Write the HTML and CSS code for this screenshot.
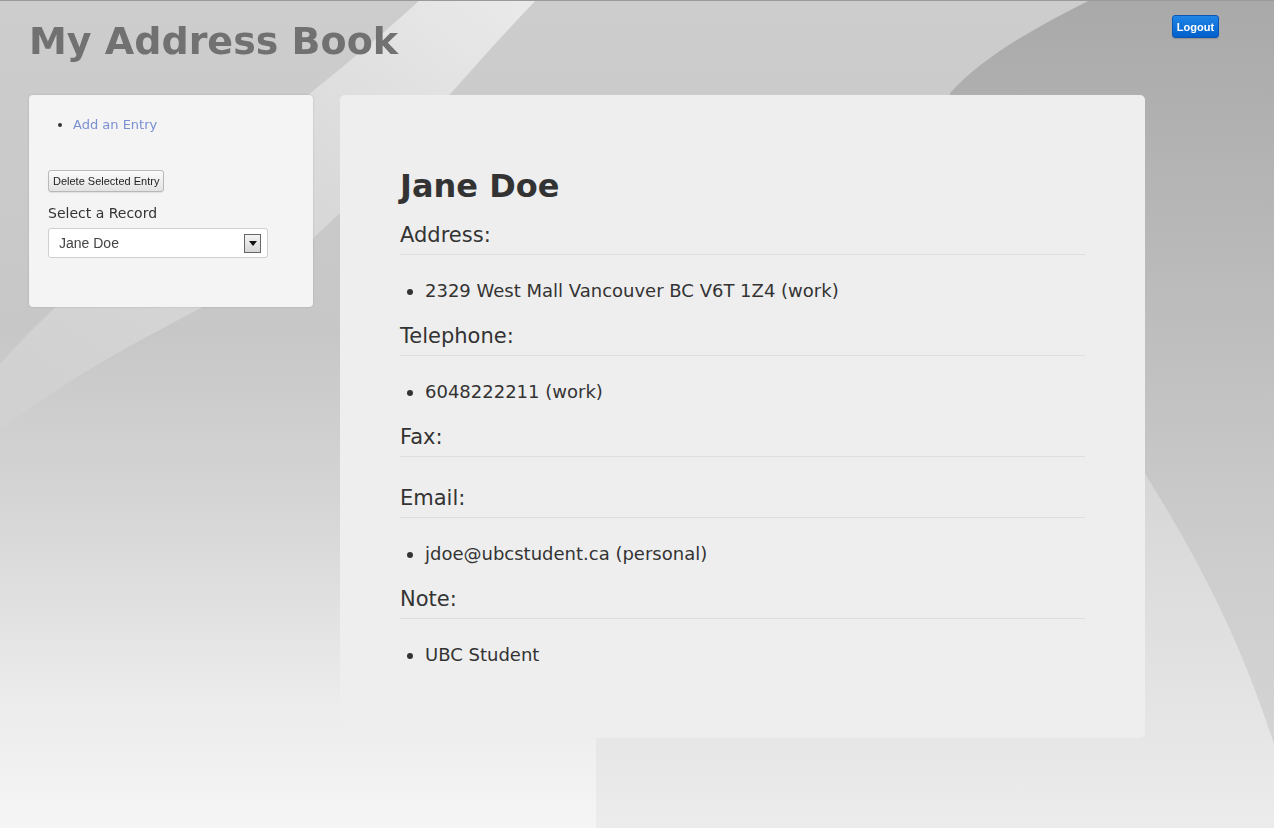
FILE: index.html
```html
<!DOCTYPE html>
<html lang="en">
<head>
<meta charset="utf-8">
<title>My Address Book</title>
<link rel="stylesheet" href="styles.css">
</head>
<body>
<svg class="backdrop" width="1274" height="828" viewBox="0 0 1274 828" preserveAspectRatio="none" aria-hidden="true">
  <defs>
    <linearGradient id="base" x1="0" y1="0" x2="0" y2="1">
      <stop offset="0" stop-color="#cdcdcd"/>
      <stop offset="0.4" stop-color="#c7c7c7"/>
      <stop offset="0.62" stop-color="#d6d6d6"/>
      <stop offset="0.85" stop-color="#ececec"/>
      <stop offset="1" stop-color="#f5f5f5"/>
    </linearGradient>
    <linearGradient id="swoosh" x1="0" y1="1" x2="1" y2="0">
      <stop offset="0" stop-color="#d0d0d0"/>
      <stop offset="0.55" stop-color="#d8d8d8"/>
      <stop offset="1" stop-color="#eaeaea"/>
    </linearGradient>
    <linearGradient id="right" x1="0" y1="0" x2="0" y2="1">
      <stop offset="0" stop-color="#a9a9a9"/>
      <stop offset="0.45" stop-color="#bebebe"/>
      <stop offset="0.75" stop-color="#cdcdcd"/>
      <stop offset="1" stop-color="#d4d4d4"/>
    </linearGradient>
    <linearGradient id="lower" x1="0" y1="0" x2="0" y2="1">
      <stop offset="0" stop-color="#d5d5d5"/>
      <stop offset="0.5" stop-color="#e0e0e0"/>
      <stop offset="1" stop-color="#ececec"/>
    </linearGradient>
  </defs>
  <rect width="1274" height="828" fill="url(#base)"/>
  <path d="M420 0 L536 0 C450 90 380 180 300 250 C230 300 100 350 0 431 L0 364 C100 250 300 110 420 0 Z" fill="url(#swoosh)"/>
  <path d="M1090 0 L1274 0 L1274 745 C1240 640 1200 560 1130 450 C1040 330 960 200 950 93 C985 55 1040 25 1090 0 Z" fill="url(#right)"/>
  <path d="M596 828 L596 450 L1130 450 C1200 560 1240 640 1274 745 L1274 828 Z" fill="url(#lower)"/>
</svg>

<header class="topbar">
  <h1 class="site-title">My Address Book</h1>
  <button class="logout" type="button">Logout</button>
</header>

<div class="layout">
  <aside class="sidebar">
    <ul class="side-links">
      <li><a href="#">Add an Entry</a></li>
    </ul>
    <button class="btn-plain" type="button">Delete Selected Entry</button>
    <label class="record-label">Select a Record</label>
    <div class="select-box">
      <span class="select-value">Jane Doe</span>
      <span class="select-arrow">
        <svg width="8" height="5" viewBox="0 0 8 5"><path d="M0 0 L8 0 L4 5 Z" fill="#111"/></svg>
      </span>
    </div>
  </aside>

  <main class="record">
    <h2 class="record-name">Jane Doe</h2>

    <h3 class="field-title">Address:</h3>
    <ul class="field-list">
      <li>2329 West Mall Vancouver BC V6T 1Z4 (work)</li>
    </ul>

    <h3 class="field-title">Telephone:</h3>
    <ul class="field-list">
      <li>6048222211 (work)</li>
    </ul>

    <h3 class="field-title">Fax:</h3>
    <ul class="field-list empty"></ul>

    <h3 class="field-title">Email:</h3>
    <ul class="field-list">
      <li>jdoe@ubcstudent.ca (personal)</li>
    </ul>

    <h3 class="field-title">Note:</h3>
    <ul class="field-list">
      <li>UBC Student</li>
    </ul>
  </main>
</div>
</body>
</html>
```

FILE: styles.css
```css
* {
  box-sizing: border-box;
}

html, body {
  height: 100%;
}

body {
  margin: 0;
  border-top: 1px solid #9a9a9a;
  font-family: "DejaVu Sans", Verdana, sans-serif;
  color: #333;
  position: relative;
  overflow: hidden;
}

.backdrop {
  position: fixed;
  left: 0;
  top: 0;
  z-index: -1;
}

.topbar {
  display: flex;
  justify-content: space-between;
  align-items: flex-start;
  height: 94px;
  padding: 0 55px 0 29px;
}

.site-title {
  margin: 17px 0 0;
  font-size: 38px;
  line-height: 46px;
  font-weight: bold;
  color: #717171;
}

.logout {
  margin-top: 14px;
  width: 47px;
  height: 23px;
  padding: 0;
  border: 1px solid #0a56b5;
  border-radius: 3px;
  background: linear-gradient(#2185e6, #0060cc);
  color: #fff;
  font-family: "Liberation Sans", Arial, sans-serif;
  font-size: 11px;
  font-weight: bold;
  box-shadow: 0 1px 1px rgba(0, 0, 0, 0.15);
}

.layout {
  display: flex;
  align-items: flex-start;
  gap: 27px;
  padding-left: 29px;
}

.sidebar {
  width: 284px;
  padding: 21px 19px 49px;
  background: #f4f4f4;
  border-radius: 4px;
  box-shadow: 0 0 2px rgba(0, 0, 0, 0.18);
}

.side-links {
  margin: 0 0 36px;
  padding-left: 25px;
  font-size: 13px;
  line-height: 18px;
}

.side-links a {
  color: #7a8fd2;
  text-decoration: none;
}

.btn-plain {
  display: block;
  height: 22px;
  padding: 0 4px;
  border: 1px solid #b8b8b8;
  border-radius: 3px;
  background: linear-gradient(#fbfbfb, #e3e3e3);
  color: #222;
  font-family: "Liberation Sans", Arial, sans-serif;
  font-size: 11px;
  box-shadow: 0 1px 1px rgba(0, 0, 0, 0.08);
}

.record-label {
  display: block;
  margin-top: 12px;
  font-size: 14px;
  line-height: 18px;
  color: #333;
}

.select-box {
  display: flex;
  align-items: center;
  justify-content: space-between;
  margin-top: 6px;
  width: 220px;
  height: 30px;
  padding: 0 6px 0 10px;
  background: #fff;
  border: 1px solid #cfcfcf;
  border-radius: 3px;
}

.select-value {
  font-family: "Liberation Sans", Arial, sans-serif;
  font-size: 14px;
  color: #444;
}

.select-arrow {
  display: flex;
  align-items: center;
  justify-content: center;
  width: 17px;
  height: 19px;
  border: 1px solid #666;
  background: linear-gradient(#f4f4f4, #d6d6d6);
}

.record {
  width: 805px;
  padding: 71px 60px 51px;
  background: #eeeeee;
  border-radius: 5px;
}

.record-name {
  margin: 0 0 16px;
  font-size: 32px;
  line-height: 40px;
  font-weight: bold;
  color: #333;
}

.field-title {
  margin: 0;
  padding-bottom: 6px;
  border-bottom: 1px solid #dedede;
  font-size: 21px;
  line-height: 26px;
  font-weight: normal;
  color: #333;
}

.field-list {
  margin: 25px 0 21px;
  padding-left: 25px;
  font-size: 18px;
  line-height: 22px;
}

.field-list.empty {
  margin-bottom: 28px;
}
```
